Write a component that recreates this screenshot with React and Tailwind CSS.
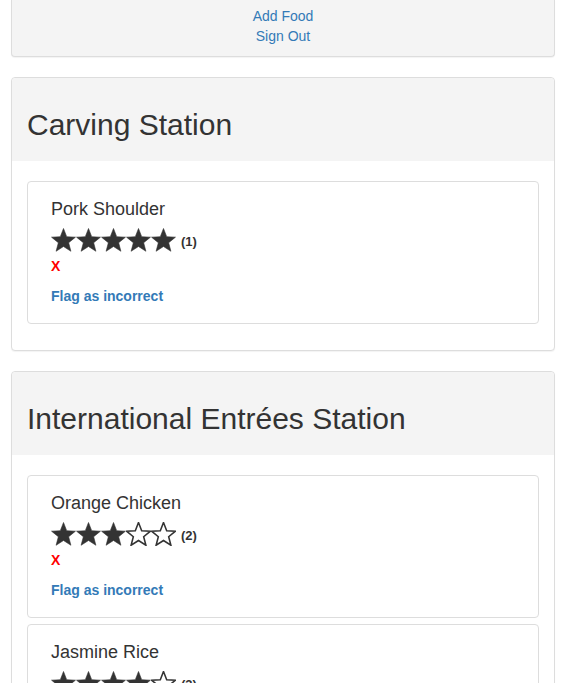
const STAR_POINTS =
  "12.5,0 15.79,8.47 24.86,8.98 17.83,14.73 20.14,23.52 12.5,18.6 4.86,23.52 7.17,14.73 0.14,8.98 9.21,8.47";

const Star = ({ filled }) => (
  <svg width="25" height="24" viewBox="-0.4 -0.4 25.8 24.6" className="block">
    <polygon
      points={STAR_POINTS}
      fill={filled ? "#333333" : "none"}
      stroke="#333333"
      strokeWidth={filled ? 0.6 : 1.6}
      strokeLinejoin="miter"
    />
  </svg>
);

const FoodCard = ({ name, rating, count }) => (
  <div className="rounded border border-[#dddddd] bg-white pt-[17px] pb-[17px] pl-[23px] pr-4">
    <div className="text-[18px] leading-[20px] text-[#333333]">{name}</div>
    <div className="mt-[9px] flex h-[24px] items-center">
      {[1, 2, 3, 4, 5].map((i) => (
        <Star key={i} filled={i <= rating} />
      ))}
      <span className="ml-[5px] pt-[3px] text-[13px] font-bold text-[#333333]">
        ({count})
      </span>
    </div>
    <div className="mt-[4px] text-[14px] font-bold leading-[20px] text-[#ff0000]">
      X
    </div>
    <a className="mt-[10px] block text-[14px] font-bold leading-[20px] text-[#337ab7]">
      Flag as incorrect
    </a>
  </div>
);

const Station = ({ title, foods }) => (
  <div className="mb-[20px] rounded border border-[#dddddd] bg-white shadow-[0_1px_1px_rgba(0,0,0,0.05)]">
    <div className="rounded-t bg-[#f4f4f4] px-[15px] pt-[30px] pb-[20px]">
      <h2 className="text-[30px] leading-[33px] text-[#333333]">{title}</h2>
    </div>
    <div className="flex flex-col gap-[6px] px-[15px] pt-[20px] pb-[26px]">
      {foods.map((f) => (
        <FoodCard key={f.name} {...f} />
      ))}
    </div>
  </div>
);

const App = () => {
  const stations = [
    {
      title: "Carving Station",
      foods: [{ name: "Pork Shoulder", rating: 5, count: 1 }],
    },
    {
      title: "International Entrées Station",
      foods: [
        { name: "Orange Chicken", rating: 3, count: 2 },
        { name: "Jasmine Rice", rating: 4, count: 3 },
      ],
    },
  ];

  return (
    <div
      className="min-h-screen bg-white pl-[11px] pr-[8px]"
      style={{ fontFamily: '"Liberation Sans", Arial, sans-serif' }}
    >
      {/* Nav panel */}
      <div className="mb-[20px] rounded-b border border-t-0 border-[#dddddd] bg-[#f4f4f4] pt-[6px] pb-[10px] text-center text-[14px] leading-[20px] shadow-[0_1px_1px_rgba(0,0,0,0.05)]">
        <a className="block text-[#337ab7]">Add Food</a>
        <a className="block text-[#337ab7]">Sign Out</a>
      </div>

      {stations.map((s) => (
        <Station key={s.title} {...s} />
      ))}
    </div>
  );
};

export default App;
